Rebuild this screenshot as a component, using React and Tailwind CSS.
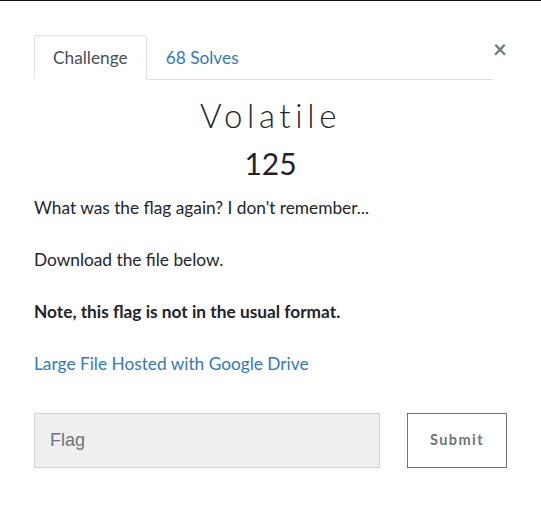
export default function App() {
  return (
    <div className="min-h-[520px] bg-white font-['Lato',sans-serif] text-[#212529]">
      {/* cut-off strip from the page behind */}
      <div className="h-px bg-[#111]" />

      <div className="px-[34px] pt-[34px]">
        {/* tabs */}
        <div className="flex items-start">
          <ul className="flex flex-1 border-b border-[#dee2e6]">
            <li className="-mb-px">
              <span className="flex h-[45px] items-center rounded-t border border-[#dee2e6] border-b-white bg-white px-[18px] text-[17.3px] text-[#495057]">
                Challenge
              </span>
            </li>
            <li className="-mb-px">
              <span className="flex h-[45px] items-center border border-transparent px-[18px] text-[17.3px] text-[#337ab7]">
                68 Solves
              </span>
            </li>
          </ul>
          <button className="mt-[2px] w-[14px] text-[24px] font-bold leading-[24px] text-[#7a7a7a]">
            ×
          </button>
        </div>

        {/* heading */}
        <h2 className="mt-[17px] text-center text-[33px] font-light leading-[36px] tracking-[0.14em] text-[#212529]">
          Volatile
        </h2>
        <h3 className="mt-[12px] text-center text-[30px] leading-[36px] text-[#212529]">
          125
        </h3>

        {/* description */}
        <div className="mt-[14px] text-[17.3px] leading-[26px] text-[#212529]">
          <p className="mb-[26px]">What was the flag again? I don't remember...</p>
          <p className="mb-[26px]">Download the file below.</p>
          <p className="mb-[26px] font-bold">Note, this flag is not in the usual format.</p>
          <p>
            <a className="text-[#337ab7]">Large File Hosted with Google Drive</a>
          </p>
        </div>

        {/* submit form */}
        <form className="mt-[36px] flex gap-[27px]">
          <input
            type="text"
            placeholder="Flag"
            className="h-[55px] w-[346px] border border-[#ced4da] bg-[#efefef] px-[15px] font-['Liberation_Sans',sans-serif] text-[18px] text-[#495057] placeholder:text-[#6c757d]"
          />
          <button
            type="button"
            className="h-[55px] w-[100px] border border-[#6c757d] bg-white pb-[2px] text-[14.5px] font-bold tracking-[0.1em] text-[#6c757d]"
          >
            Submit
          </button>
        </form>
      </div>
    </div>
  );
}
